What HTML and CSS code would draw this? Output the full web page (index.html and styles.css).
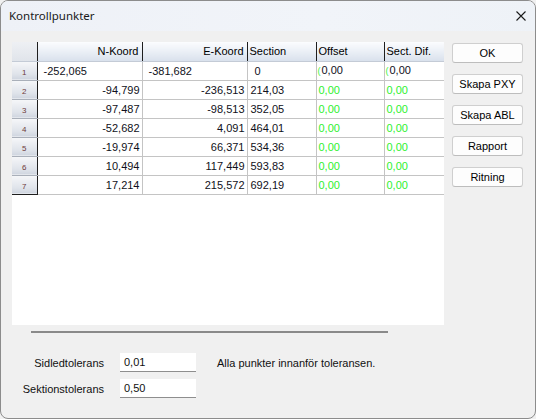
FILE: index.html
```html
<!DOCTYPE html>
<html lang="sv">
<head>
    <meta charset="UTF-8">
    <title>Kontrollpunkter</title>
    <link rel="stylesheet" href="styles.css">
</head>
<body>
    <div class="window">
        <div class="titlebar">
            <div class="title">Kontrollpunkter</div>
            <svg class="close" width="10" height="10" viewBox="0 0 10 10">
                <path d="M0.5 0.5 L9.5 9.5 M9.5 0.5 L0.5 9.5" stroke="#1a1a1a" stroke-width="1.1" fill="none"/>
            </svg>
        </div>
        <div class="content">
            <div class="main">
                <div class="grid_box">
                    <table class="grid">
                        <colgroup>
                            <col class="c_fix">
                            <col class="c_n">
                            <col class="c_e">
                            <col class="c_sec">
                            <col class="c_off">
                            <col class="c_dif">
                        </colgroup>
                        <tr class="head">
                            <th class="corner"></th>
                            <th class="right">N-Koord</th>
                            <th class="right">E-Koord</th>
                            <th>Section</th>
                            <th>Offset</th>
                            <th>Sect. Dif.</th>
                        </tr>
                        <tr class="edit">
                            <td class="fix">1</td>
                            <td>-252,065</td>
                            <td>-381,682</td>
                            <td class="sec0">0</td>
                            <td class="mark"><span class="caret">(</span>0,00</td>
                            <td class="mark"><span class="caret">(</span>0,00</td>
                        </tr>
                        <tr>
                            <td class="fix">2</td>
                            <td class="num">-94,799</td>
                            <td class="num">-236,513</td>
                            <td>214,03</td>
                            <td class="ok">0,00</td>
                            <td class="ok">0,00</td>
                        </tr>
                        <tr>
                            <td class="fix">3</td>
                            <td class="num">-97,487</td>
                            <td class="num">-98,513</td>
                            <td>352,05</td>
                            <td class="ok">0,00</td>
                            <td class="ok">0,00</td>
                        </tr>
                        <tr>
                            <td class="fix">4</td>
                            <td class="num">-52,682</td>
                            <td class="num">4,091</td>
                            <td>464,01</td>
                            <td class="ok">0,00</td>
                            <td class="ok">0,00</td>
                        </tr>
                        <tr>
                            <td class="fix">5</td>
                            <td class="num">-19,974</td>
                            <td class="num">66,371</td>
                            <td>534,36</td>
                            <td class="ok">0,00</td>
                            <td class="ok">0,00</td>
                        </tr>
                        <tr>
                            <td class="fix">6</td>
                            <td class="num">10,494</td>
                            <td class="num">117,449</td>
                            <td>593,83</td>
                            <td class="ok">0,00</td>
                            <td class="ok">0,00</td>
                        </tr>
                        <tr class="last">
                            <td class="fix">7</td>
                            <td class="num">17,214</td>
                            <td class="num">215,572</td>
                            <td>692,19</td>
                            <td class="ok">0,00</td>
                            <td class="ok">0,00</td>
                        </tr>
                    </table>
                </div>
                <div class="buttons">
                    <button class="btn">OK</button>
                    <button class="btn">Skapa PXY</button>
                    <button class="btn">Skapa ABL</button>
                    <button class="btn">Rapport</button>
                    <button class="btn">Ritning</button>
                </div>
            </div>
            <div class="scroll_line"></div>
            <div class="form">
                <div class="label">Sidledtolerans</div>
                <div class="field">0,01</div>
                <div class="message">Alla punkter innanför toleransen.</div>
                <div class="label">Sektionstolerans</div>
                <div class="field">0,50</div>
                <div></div>
            </div>
        </div>
    </div>
</body>
</html>
```

FILE: styles.css
```css
html,
body
{
    margin: 0;
    padding: 0;
    background-color: #f0f0f0;
}
.window
{
    width: 536px;
    height: 419px;
    box-sizing: border-box;
    border: 1px solid #8c8c8c;
    border-radius: 8px;
    overflow: hidden;
    background-color: #f0f0f0;
    font-family: "Liberation Sans", Arial, sans-serif;
    font-size: 11px;
    color: #000;
}
.titlebar
{
    height: 30px;
    display: flex;
    align-items: center;
    justify-content: space-between;
    padding: 0 9px 0 8px;
    background: linear-gradient(90deg, #eef1f7, #f1f4f9 60%, #eef2f7);
}
.title
{
    font-family: "Noto Sans", "Open Sans", sans-serif;
    font-size: 11.5px;
    color: #1a1a1a;
    padding-bottom: 1px;
}
.grid_box
{
    width: 432px;
    height: 283px;
    background-color: #fff;
    overflow: hidden;
}
.content
{
    padding: 11px 0 0 11px;
}
.main
{
    display: flex;
    gap: 8px;
}
.grid
{
    table-layout: fixed;
    border-collapse: collapse;
    width: 432px;
}
.c_fix { width: 25px; }
.c_n { width: 105px; }
.c_e { width: 105px; }
.c_sec { width: 69px; }
.c_off { width: 68px; }
.c_dif { width: 60px; }
.grid tr
{
    height: 19px;
}
.grid th,
.grid td
{
    height: 19px;
    padding: 0 2px 0 3px;
    white-space: nowrap;
    overflow: hidden;
    font-weight: normal;
    text-align: left;
    box-sizing: border-box;
    line-height: 16px;
    vertical-align: middle;
}
.grid td
{
    border-right: 1px solid #c4c4c4;
    border-bottom: 1px solid #c4c4c4;
    color: #101020;
}
.head th
{
    background: linear-gradient(#fbfcfe, #e9eef5 55%, #d9e1ec);
    border-right: 1px solid #1e1e1e;
    border-bottom: 1px solid #c4cbd6;
    padding: 0 3px 0 2px;
}
.head th.right
{
    text-align: right;
}
.grid th.corner
{
    background: linear-gradient(#eef0f4, #e0e4ea);
}
.grid td.fix
{
    background: linear-gradient(#f6f7f9, #dfe3ea 70%, #cfd5df);
    border-right: 1px solid #1e1e1e;
    border-bottom: 1px solid #a9afb9;
    text-align: center;
    font-size: 8px;
    line-height: 10px;
    color: #6e3a3a;
    padding: 4px 0 0 0;
}
.last td.fix
{
    border-bottom: 1px solid #1e1e1e;
}
.grid td.num
{
    text-align: right;
    padding: 0 2px 0 0;
}
.edit td
{
    padding-left: 6px;
}
.edit td.sec0
{
    padding-left: 7px;
}
.edit td.mark
{
    padding-left: 1px;
}
.caret
{
    color: #3cf03c;
    font-size: 9px;
    margin-right: 1px;
}
.grid td.ok
{
    color: #2ef02e;
    padding-left: 2px;
}
.buttons
{
    display: flex;
    flex-direction: column;
    gap: 11px;
    padding-top: 1px;
}
.btn
{
    width: 71px;
    height: 20px;
    padding: 0;
    border: 1px solid #cfcfcf;
    border-bottom-color: #bdbdbd;
    border-radius: 3px;
    background-color: #fdfdfd;
    font-family: "Liberation Sans", Arial, sans-serif;
    font-size: 11px;
    color: #000;
}
.scroll_line
{
    width: 357px;
    height: 2px;
    margin: 6px 0 0 19px;
    background-color: #8a8a8a;
}
.form
{
    display: grid;
    grid-template-columns: 92px 76px auto;
    grid-template-rows: 19px 19px;
    row-gap: 7px;
    column-gap: 16px;
    margin-top: 20px;
    align-items: center;
}
.label
{
    text-align: right;
    color: #101010;
}
.field
{
    height: 19px;
    box-sizing: border-box;
    background-color: #fff;
    border-bottom: 1px solid #8e8e8e;
    padding: 3px 0 0 4px;
    color: #101010;
}
.message
{
    padding-left: 5px;
    color: #101010;
}
```
